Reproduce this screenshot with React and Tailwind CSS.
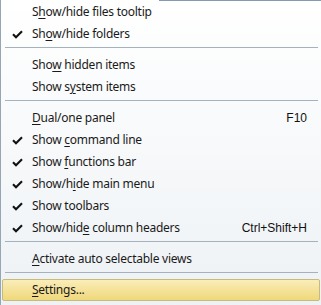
import React from "react";

const Check = () => (
  <svg width="11" height="9" viewBox="0 0 11 9" className="block">
    <path d="M1 4.3 L4 7.3 L10 1.3" fill="none" stroke="#111" strokeWidth="2.1" />
  </svg>
);

const U = ({ children }) => <span className="underline underline-offset-2 decoration-1">{children}</span>;

const Item = ({ checked, children, shortcut, active }) => (
  <div
    className={
      "flex items-center h-[22px] " +
      (active
        ? "mx-px border border-[#c6bb7f] rounded-[2px] bg-gradient-to-b from-[#faedb8] to-[#f0d87a]"
        : "")
    }
  >
    <div className={"flex justify-center pl-[2px] " + (active ? "w-[29px]" : "w-[31px]")}>
      {checked ? <Check /> : null}
    </div>
    <div className="flex-1 whitespace-nowrap tracking-[-0.25px]">{children}</div>
    {shortcut ? (
      <div className="pr-[14px] text-[12px] text-[#111]" style={{ fontFamily: '"Liberation Sans", Arial, sans-serif' }}>
        {shortcut}
      </div>
    ) : null}
  </div>
);

const Sep = () => (
  <div className="h-[9px] pt-[2px]">
    <div className="ml-[4px] mr-[3px] h-px bg-[#a5b2bd]" />
  </div>
);

export default function App() {
  return (
    <div
      className="w-[321px] h-[305px] overflow-hidden border-l border-[#97a6b5] bg-gradient-to-b from-white to-[#eef2f5] text-[12px] text-[#1a1a1a]"
      style={{ fontFamily: '"Noto Sans", "Open Sans", sans-serif' }}
    >
      <div className="h-px ml-[158px] bg-[#8499b5]" />
      <Item>S<U>h</U>ow/hide files tooltip</Item>
      <Item checked>Sh<U>o</U>w/hide folders</Item>
      <Sep />
      <Item>Sho<U>w</U> hidden items</Item>
      <Item>Show s<U>y</U>stem items</Item>
      <Sep />
      <Item shortcut="F10"><U>D</U>ual/one panel</Item>
      <Item checked>Show <U>c</U>ommand line</Item>
      <Item checked>Show <U>f</U>unctions bar</Item>
      <Item checked>Show/h<U>i</U>de main menu</Item>
      <Item checked>Show toolbars</Item>
      <Item checked shortcut="Ctrl+Shift+H">Show/hid<U>e</U> column headers</Item>
      <Sep />
      <Item><U>A</U>ctivate auto selectable views</Item>
      <Sep />
      <Item active><U>S</U>ettings...</Item>
    </div>
  );
}
